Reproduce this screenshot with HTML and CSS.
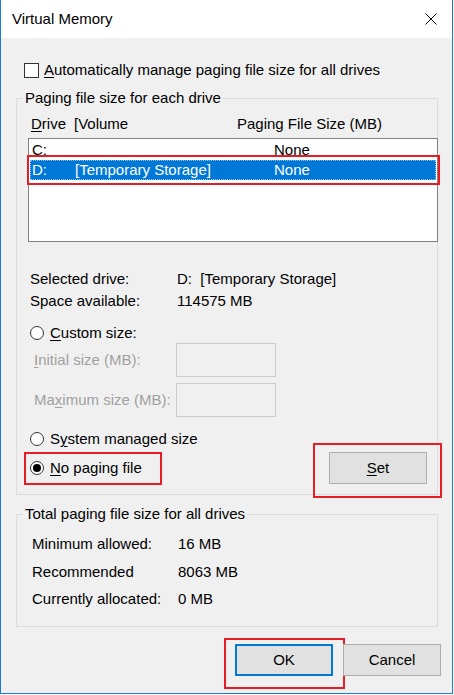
FILE: index.html
```html
<!DOCTYPE html>
<html>
<head>
<meta charset="utf-8">
<title>Virtual Memory</title>
<link rel="stylesheet" href="styles.css">
</head>
<body>
<div class="window">
  <div class="titlebar">
    <span class="title">Virtual Memory</span>
    <svg class="close" viewBox="0 0 12 12"><path d="M0.5 0.5 L11.5 11.5 M11.5 0.5 L0.5 11.5" stroke="#000" stroke-width="1" fill="none"/></svg>
  </div>
  <div class="dialog">
    <div class="check-row"><span class="checkbox"></span><span><u>A</u>utomatically manage paging file size for all drives</span></div>

    <fieldset class="group group-drives">
      <legend>Paging file size for each drive</legend>
      <div class="list-head"><span class="col-drive"><u>D</u>rive</span><span class="col-vol">[Volume</span><span>Paging File Size (MB)</span></div>
      <div class="listbox">
        <div class="row"><span class="c1">C:</span><span class="c2"></span><span>None</span></div>
        <div class="row selected"><span class="c1">D:</span><span class="c2">[Temporary Storage]</span><span>None</span></div>
      </div>
      <div class="info">
        <div class="kv"><span class="k">Selected drive:</span><span>D:&nbsp; [Temporary Storage]</span></div>
        <div class="kv"><span class="k">Space available:</span><span>114575 MB</span></div>
      </div>
      <div class="radio-row custom"><span class="radio"></span><span><u>C</u>ustom size:</span></div>
      <div class="size-row"><span class="size-label"><u>I</u>nitial size (MB):</span><span class="size-input"></span></div>
      <div class="size-row second"><span class="size-label">Ma<u>x</u>imum size (MB):</span><span class="size-input"></span></div>
      <div class="radio-row system"><span class="radio"></span><span>S<u>y</u>stem managed size</span></div>
      <div class="bottom-row">
        <div class="radio-row nopage"><span class="radio checked"></span><span><u>N</u>o paging file</span></div>
        <div class="btn set"><span><u>S</u>et</span></div>
      </div>
    </fieldset>

    <fieldset class="group group-total">
      <legend>Total paging file size for all drives</legend>
      <div class="totals">
        <div class="trow"><span class="k">Minimum allowed:</span><span>16 MB</span></div>
        <div class="trow"><span class="k">Recommended</span><span>8063 MB</span></div>
        <div class="trow"><span class="k">Currently allocated:</span><span>0 MB</span></div>
      </div>
    </fieldset>

    <div class="buttons">
      <div class="btn ok">OK</div>
      <div class="btn cancel">Cancel</div>
    </div>
  </div>
</div>
</body>
</html>
```
FILE: styles.css
```css
* { box-sizing: border-box; }
html, body { margin: 0; padding: 0; background: #fff; }
body {
  font-family: "Liberation Sans", Arial, sans-serif;
  font-size: 15px;
  line-height: 20px;
  color: #000;
}
u { text-decoration: underline; text-underline-offset: 2px; text-decoration-thickness: 1px; }

.window {
  width: 453px;
  height: 694px;
  border: 1px solid #1c7cd5;
  border-top: none;
  display: flex;
  flex-direction: column;
  background: #f0f0f0;
}
.titlebar {
  flex: none;
  height: 38px;
  background: #fff;
  display: flex;
  align-items: center;
  padding: 0 15px 0 11px;
}
.title { flex: 1; }
.close { width: 12px; height: 12px; display: block; }

.dialog { flex: 1; padding: 0 14px 0 15px; }

.check-row {
  margin-top: 22px;
  height: 20px;
  display: flex;
  align-items: center;
  padding-left: 8px;
}
.checkbox {
  width: 15px; height: 15px;
  border: 1px solid #333;
  background: #fff;
  margin-right: 5px;
}

.group {
  margin: 0;
  padding: 0 0 10px 0;
  border: 1px solid #dcdcdc;
  min-width: 0;
  width: 422px;
}
.group legend { margin-left: 6px; padding: 0 2px; line-height: 20px; }
.group-drives { margin-top: 8px; }

.list-head { margin-top: 6px; display: flex; padding-left: 14px; height: 20px; }
.col-drive { width: 43px; }
.col-vol { width: 163px; }

.listbox {
  margin: 4px -1px 0 11px;
  height: 104px;
  border: 1px solid #828282;
  background: #fff;
  padding: 1px;
}
.row { height: 20px; display: flex; padding-left: 2px; }
.c1 { width: 43px; }
.c2 { width: 199px; }
.row.selected {
  background: #0078d7;
  color: #fff;
  position: relative;
  outline: 1px dotted rgba(255,255,255,0.55);
  outline-offset: -1px;
}
.row.selected::after {
  content: "";
  position: absolute;
  left: -3px; top: -5px; right: -4px; bottom: -5px;
  border: 2px solid #e81c24;
}

.info { margin-top: 26px; padding-left: 13px; }
.kv { display: flex; height: 22px; line-height: 22px; }
.kv .k { width: 147px; }

.radio-row { display: flex; align-items: center; height: 20px; padding-left: 13px; }
.radio {
  width: 14px; height: 14px;
  border: 1px solid #333;
  border-radius: 50%;
  background: #fff;
  margin-right: 6px;
  display: flex; align-items: center; justify-content: center;
}
.radio.checked::before {
  content: "";
  width: 8px; height: 8px;
  border-radius: 50%;
  background: #000;
}
.custom { margin-top: 11px; }
.system { margin-top: 12px; }

.size-row { display: flex; align-items: center; height: 34px; padding-left: 17px; color: #a0a0a0; }
.size-row.second { margin-top: 6px; }
.size-label { width: 142px; }
.size-input { width: 100px; height: 34px; border: 1px solid #cccccc; background: #f0f0f0; }

.bottom-row {
  margin-top: 3px;
  height: 32px;
  display: flex;
  align-items: center;
  padding-right: 10px;
}
.nopage { position: relative; }
.nopage::after {
  content: "";
  position: absolute;
  left: 7px; top: -6px;
  width: 134px; height: 29px;
  border: 2px solid #e81c24;
}

.btn {
  width: 98px; height: 32px;
  background: #e1e1e1;
  border: 1px solid #adadad;
  display: flex; align-items: center; justify-content: center;
  position: relative;
}
.set { margin-left: auto; }
.set::after {
  content: "";
  position: absolute;
  left: -17px; top: -10px;
  width: 125px; height: 51px;
  border: 2px solid #e81c24;
}

.group-total { margin-top: 9px; padding-bottom: 13.5px; }
.totals { margin-top: 6px; padding-left: 15px; }
.trow { display: flex; line-height: 27.5px; height: 27.5px; }
.trow .k { width: 146px; }

.buttons {
  margin: 17px -3px 0 0;
  display: flex;
  justify-content: flex-end;
  gap: 10px;
}
.ok { border: 2px solid #0078d7; }
.ok::after {
  content: "";
  position: absolute;
  left: -13px; top: -8px;
  width: 117px; height: 47px;
  border: 2px solid #e81c24;
}
```
